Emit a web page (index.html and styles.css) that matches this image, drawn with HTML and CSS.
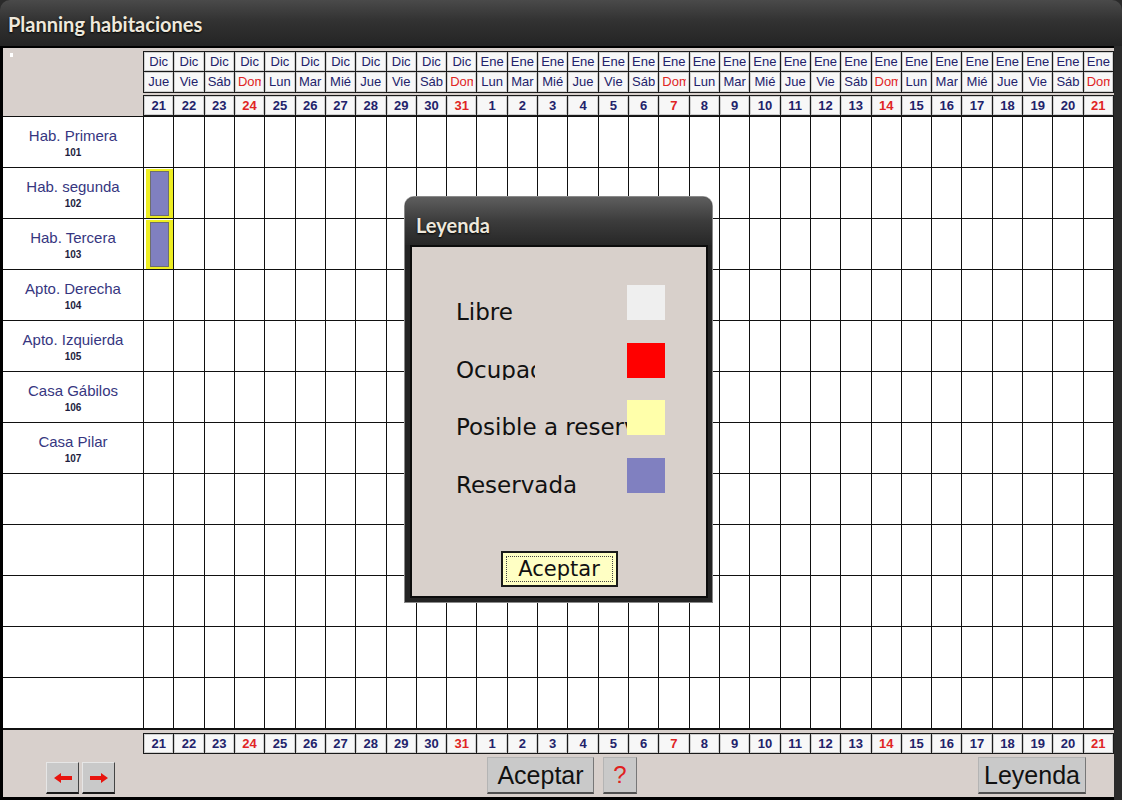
FILE: index.html
```html
<!DOCTYPE html>
<html lang="es">
<head>
  <meta charset="UTF-8" />
  <title>Planning habitaciones</title>
  <link rel="stylesheet" href="styles.css">
</head>
<body>
  <div class="window">
    <div class="titlebar">Planning habitaciones</div>

    <div class="frame">
      <div class="head">
        <div class="corner"><span class="mark"></span></div>
        <div class="dates">
          <div class="date-grid top" id="headTop"></div>
          <div class="date-grid nums" id="headNums"></div>
        </div>
      </div>

      <div class="board" id="board"></div>

      <div class="foot">
        <div class="foot-nums">
          <div></div>
          <div class="date-grid nums" id="footNums"></div>
        </div>
        <div class="buttons">
          <div class="nav">
            <button class="btn arrow" title="Anterior">
              <svg width="18" height="10" viewBox="0 0 18 10"><path d="M0 5 L7 0 V3 H18 V7 H7 V10 Z" fill="#e8140e"/></svg>
            </button>
            <button class="btn arrow" title="Siguiente">
              <svg width="18" height="10" viewBox="0 0 18 10"><path d="M18 5 L11 0 V3 H0 V7 H11 V10 Z" fill="#e8140e"/></svg>
            </button>
          </div>
          <div class="center">
            <button class="btn accept">Aceptar</button>
            <button class="btn help">?</button>
          </div>
          <button class="btn legend-btn">Leyenda</button>
        </div>
      </div>
    </div>

    <!-- ventana de leyenda -->
    <div class="legend">
      <div class="legend-title">Leyenda</div>
      <div class="legend-body">
        <div class="legend-row">
          <div class="legend-label">Libre</div>
          <div class="swatch libre"></div>
        </div>
        <div class="legend-row">
          <div class="legend-label short">Ocupada</div>
          <div class="swatch ocupada"></div>
        </div>
        <div class="legend-row">
          <div class="legend-label">Posible a reservar</div>
          <div class="swatch posible"></div>
        </div>
        <div class="legend-row">
          <div class="legend-label">Reservada</div>
          <div class="swatch reservada"></div>
        </div>
        <button class="legend-ok">Aceptar</button>
      </div>
    </div>
  </div>

  <script>
    const DAYS = ["Dom", "Lun", "Mar", "Mié", "Jue", "Vie", "Sáb"];
    const rooms = [
      ["Hab. Primera", "101"],
      ["Hab. segunda", "102"],
      ["Hab. Tercera", "103"],
      ["Apto. Derecha", "104"],
      ["Apto. Izquierda", "105"],
      ["Casa Gábilos", "106"],
      ["Casa Pilar", "107"]
    ];
    const TOTAL_ROWS = 12;
    const TOTAL_DAYS = 32;
    // reservas: fila -> columnas de día
    const booked = { 1: [0], 2: [0] };

    const headTop = document.getElementById("headTop");
    const headNums = document.getElementById("headNums");
    const footNums = document.getElementById("footNums");
    const board = document.getElementById("board");

    function cell(text, cls) {
      const el = document.createElement("div");
      el.className = "cell" + (cls ? " " + cls : "");
      const span = document.createElement("span");
      span.textContent = text;
      el.appendChild(span);
      return el;
    }

    // 21 Dic (jueves) en adelante
    for (let i = 0; i < TOTAL_DAYS; i++) {
      const month = i < 11 ? "Dic" : "Ene";
      const date = i < 11 ? 21 + i : i - 10;
      const dow = (4 + i) % 7;
      const sun = dow === 0 ? "sun" : "";
      headTop.appendChild(cell(month));
      headTop.appendChild(cell(DAYS[dow], sun));
      headNums.appendChild(cell(date, sun));
      footNums.appendChild(cell(date, sun));
    }

    for (let r = 0; r < TOTAL_ROWS; r++) {
      const label = document.createElement("div");
      label.className = "room";
      if (rooms[r]) {
        label.innerHTML = '<div class="name">' + rooms[r][0] + '</div><div class="num">' + rooms[r][1] + '</div>';
      }
      board.appendChild(label);
      for (let d = 0; d < TOTAL_DAYS; d++) {
        const slot = document.createElement("div");
        slot.className = "slot";
        if (booked[r] && booked[r].includes(d)) {
          const b = document.createElement("div");
          b.className = "booking";
          slot.appendChild(b);
        }
        board.appendChild(slot);
      }
    }
  </script>
</body>
</html>
```

FILE: styles.css
```css
* {
  box-sizing: border-box;
}
body {
  margin: 0;
  background: #1c1c1c;
  font-family: "Liberation Sans", Arial, sans-serif;
}
.window {
  position: relative;
  width: 1122px;
  height: 800px;
  background: #2a2a2a;
}
.titlebar {
  height: 46px;
  padding: 12px 0 0 8px;
  border-radius: 10px 10px 0 0;
  background: linear-gradient(#4a4a4a, #323232 45%, #242424);
  font-family: Lato, sans-serif;
  font-weight: 700;
  font-size: 20px;
  color: #efe9dc;
  text-shadow: 0 1px 2px #000;
}
.frame {
  width: 1114px;
  border-top: 2px solid #000;
  border-left: 3px solid #000;
  border-bottom: 3px solid #000;
  background: #d8d0cc;
}

/* cabecera de fechas */
.head {
  display: grid;
  grid-template-columns: 140px 1fr;
  height: 68px;
}
.corner {
  position: relative;
}
.corner .mark {
  position: absolute;
  left: 7px;
  top: 5px;
  width: 3px;
  height: 4px;
  background: #fff;
}
.dates {
  padding-top: 3px;
  display: flex;
  flex-direction: column;
  gap: 2px;
}
.date-grid {
  display: grid;
  grid-template-columns: repeat(32, 1fr);
  gap: 1px;
  padding: 1px;
  background: #1a1a1a;
}
.date-grid.top {
  grid-template-rows: 19px 20px;
  grid-auto-flow: column;
}
.date-grid.nums {
  grid-template-rows: 19px;
}
.cell {
  background: #f7f7f7;
  box-shadow: inset 0 0 0 1px #cfcfcf;
  overflow: hidden;
  color: #22226a;
  font-size: 13px;
  line-height: 19px;
}
.cell span {
  display: block;
  margin: 0 3px;
  overflow: hidden;
  white-space: nowrap;
  text-align: center;
}
.nums .cell {
  font-weight: 700;
}
.cell.sun {
  color: #e02424;
}

/* rejilla de habitaciones */
.board {
  display: grid;
  grid-template-columns: 140px repeat(32, 1fr);
  grid-auto-rows: 50px;
  gap: 1px;
  padding: 1px 1px 2px 0;
  background: #111;
}
.room {
  background: #fff;
  text-align: center;
  padding-top: 11px;
}
.room .name {
  color: #363680;
  font-size: 15px;
  line-height: 16px;
}
.room .num {
  margin-top: 2px;
  color: #1d1d40;
  font-size: 10px;
  font-weight: 700;
  line-height: 14px;
}
.slot {
  background: #fff;
}
.booking {
  height: calc(100% - 1px);
  margin: 1px 0 0 2px;
  border: solid #eeee22;
  border-width: 2px 4px;
  background: #8080c0;
  box-shadow: inset 0 0 0 1px #6e6e6e;
}

/* pie */
.foot {
  height: 67px;
  padding-top: 3px;
}
.foot-nums {
  display: grid;
  grid-template-columns: 140px 1fr;
}
.buttons {
  display: grid;
  grid-template-columns: 1fr auto 1fr;
  align-items: end;
  height: 37px;
  margin-top: 3px;
}
.nav {
  display: flex;
  gap: 3px;
  padding-left: 43px;
}
.center {
  display: flex;
  gap: 9px;
  margin-left: 7px;
}
.btn {
  height: 37px;
  padding: 0;
  background: #c9c9c9;
  border: 1px solid #b4b4b4;
  border-bottom: 2px solid #505050;
  border-right-color: #777;
  font-family: "Liberation Sans", Arial, sans-serif;
  font-size: 25px;
  color: #111;
}
.btn.arrow {
  width: 33px;
  height: 32px;
  border-color: #e6e6e6 #444 #1a1a1a #e6e6e6;
  display: flex;
  align-items: center;
  justify-content: center;
}
.btn.accept {
  width: 107px;
}
.btn.help {
  width: 34px;
  color: #e02020;
  font-size: 24px;
}
.legend-btn {
  justify-self: end;
  width: 108px;
  margin-right: 28px;
}

/* ventana de leyenda */
.legend {
  position: absolute;
  left: 405px;
  top: 197px;
  width: 307px;
  height: 405px;
  display: flex;
  flex-direction: column;
  padding: 0 4px 4px 5px;
  background: #242424;
  border-radius: 9px 9px 0 0;
  box-shadow: 0 0 0 1px #8a8a8a;
}
.legend-title {
  height: 48px;
  margin: 0 -4px 0 -5px;
  padding: 16px 0 0 11px;
  border-radius: 9px 9px 0 0;
  background: linear-gradient(#5e5e5e, #3c3c3c 50%, #272727);
  font-family: Lato, sans-serif;
  font-weight: 700;
  font-size: 20px;
  line-height: 24px;
  color: #eee8dc;
  text-shadow: 0 1px 2px #000;
}
.legend-body {
  flex: 1;
  display: flex;
  flex-direction: column;
  padding: 38px 0 0 44px;
  background: #d8d0cb;
  border: 2px solid #0c0c0c;
}
.legend-row {
  display: flex;
  height: 57.5px;
}
.legend-label {
  width: 171px;
  height: 37px;
  padding-top: 14px;
  overflow: hidden;
  white-space: nowrap;
  font-family: "DejaVu Sans", sans-serif;
  font-size: 23px;
  color: #111;
}
.legend-label.short {
  width: 79px;
  margin-right: 92px;
}
.swatch {
  width: 38px;
  height: 35px;
}
.swatch.libre { background: #efefef; }
.swatch.ocupada { background: #ff0000; }
.swatch.posible { background: #ffffaa; }
.swatch.reservada { background: #8080c0; }
.legend-ok {
  align-self: center;
  margin: 36px 0 0 -44px;
  width: 117px;
  height: 36px;
  padding: 0;
  background: #ffffc4;
  border: 2px solid #1a1a1a;
  outline: 1px dotted #444;
  outline-offset: -6px;
  font-family: "DejaVu Sans", sans-serif;
  font-size: 21px;
  color: #111;
}
```
